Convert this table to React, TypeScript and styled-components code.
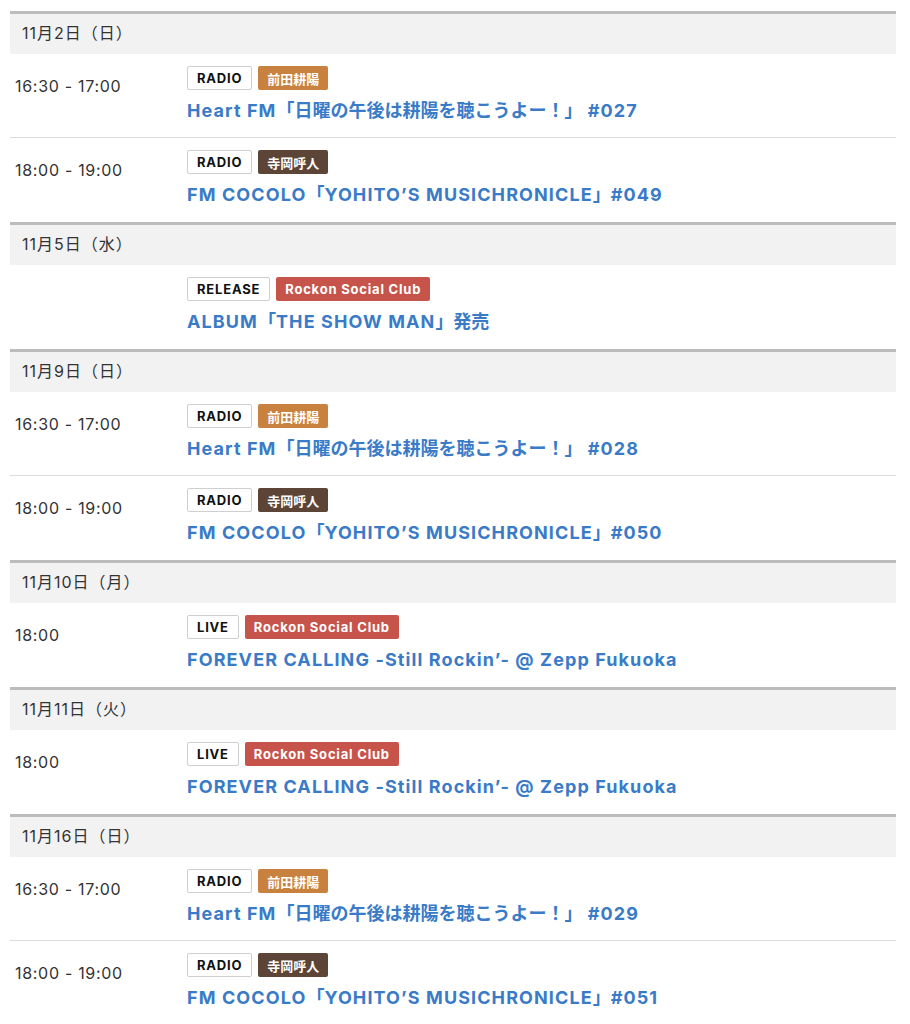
import React from 'react';
import styled, { createGlobalStyle } from 'styled-components';

const GlobalStyle = createGlobalStyle`
    body {
        margin: 0;
        background: #ffffff;
        font-family: Inter, 'Noto Sans CJK JP', sans-serif;
        color: #333333;
    }
`;

const Wrapper = styled.div`
    margin: 11px 14px 0 10px;
`;

const DayHeader = styled.div`
    border-top: 3px solid #bcbcbc;
    background: #f2f2f2;
    height: 43px;
    box-sizing: border-box;
    padding: 9px 12px 0;
    font-size: 16px;
    line-height: 20px;
    letter-spacing: 1px;
    color: #333333;
`;

const Row = styled.div<{ $last: boolean }>`
    display: grid;
    grid-template-columns: 172px 1fr;
    align-items: start;
    padding: 12px 0 0 5px;
    border-bottom: ${(p) => (p.$last ? 'none' : '1px solid #dddddd')};
    height: 84px;
    box-sizing: border-box;
`;

const Time = styled.div`
    padding-top: 10px;
    font-size: 16px;
    line-height: 20px;
    letter-spacing: 0.7px;
    color: #333333;
`;

const Tags = styled.div`
    display: flex;
    gap: 6px;
    height: 24px;
`;

const Tag = styled.span<{ $bg?: string; $cjk?: boolean }>`
    display: inline-flex;
    align-items: center;
    height: 24px;
    box-sizing: border-box;
    padding: 0 9px;
    border-radius: 2px;
    font-size: 13px;
    font-weight: 700;
    letter-spacing: ${(p) => (p.$cjk ? '0' : '0.8px')};
    background: ${(p) => p.$bg || '#ffffff'};
    color: ${(p) => (p.$bg ? '#ffffff' : '#111111')};
    border: ${(p) => (p.$bg ? 'none' : '1px solid #cfcfcf')};
`;

const Title = styled.a`
    display: block;
    margin-top: 7px;
    font-size: 18px;
    line-height: 28px;
    font-weight: 700;
    letter-spacing: 1.1px;
    color: #3a7bc8;
    text-decoration: none;
    white-space: nowrap;
`;

// Japanese runs keep their natural width, only latin letters are spaced out
const Jp = styled.span`
    letter-spacing: 0;
`;

const CJK = /([\u3000-\u30ff\u4e00-\u9fff\uff00-\uffef]+)/;

const renderTitle = (title: string) =>
    title
        .split(CJK)
        .map((part, i) => (CJK.test(part) ? <Jp key={i}>{part}</Jp> : part));

const ARTISTS: Record<string, string> = {
    前田耕陽: '#c8813f',
    寺岡呼人: '#5c4536',
    'Rockon Social Club': '#c7544b',
};

type Item = { time: string; kind: string; artist: string; title: string };

const heart = (n: string): Item => ({
    time: '16:30 - 17:00',
    kind: 'RADIO',
    artist: '前田耕陽',
    title: `Heart FM「日曜の午後は耕陽を聴こうよー！」 #${n}`,
});

const cocolo = (n: string): Item => ({
    time: '18:00 - 19:00',
    kind: 'RADIO',
    artist: '寺岡呼人',
    title: `FM COCOLO「YOHITO’S MUSICHRONICLE」#${n}`,
});

const live: Item = {
    time: '18:00',
    kind: 'LIVE',
    artist: 'Rockon Social Club',
    title: 'FOREVER CALLING -Still Rockin’- @ Zepp Fukuoka',
};

const days: { date: string; items: Item[] }[] = [
    { date: '11月2日（日）', items: [heart('027'), cocolo('049')] },
    {
        date: '11月5日（水）',
        items: [
            {
                time: '',
                kind: 'RELEASE',
                artist: 'Rockon Social Club',
                title: 'ALBUM「THE SHOW MAN」発売',
            },
        ],
    },
    { date: '11月9日（日）', items: [heart('028'), cocolo('050')] },
    { date: '11月10日（月）', items: [live] },
    { date: '11月11日（火）', items: [live] },
    { date: '11月16日（日）', items: [heart('029'), cocolo('051')] },
];

const App = () => {
    return (
        <Wrapper>
            <GlobalStyle />
            {days.map((day) => (
                <section key={day.date}>
                    <DayHeader>{day.date}</DayHeader>
                    {day.items.map((item, i) => (
                        <Row key={i} $last={i === day.items.length - 1}>
                            <Time>{item.time}</Time>
                            <div>
                                <Tags>
                                    <Tag>{item.kind}</Tag>
                                    <Tag
                                        $bg={ARTISTS[item.artist]}
                                        $cjk={item.artist !== 'Rockon Social Club'}
                                    >
                                        {item.artist}
                                    </Tag>
                                </Tags>
                                <Title href="#">{renderTitle(item.title)}</Title>
                            </div>
                        </Row>
                    ))}
                </section>
            ))}
        </Wrapper>
    );
};

export default App;
